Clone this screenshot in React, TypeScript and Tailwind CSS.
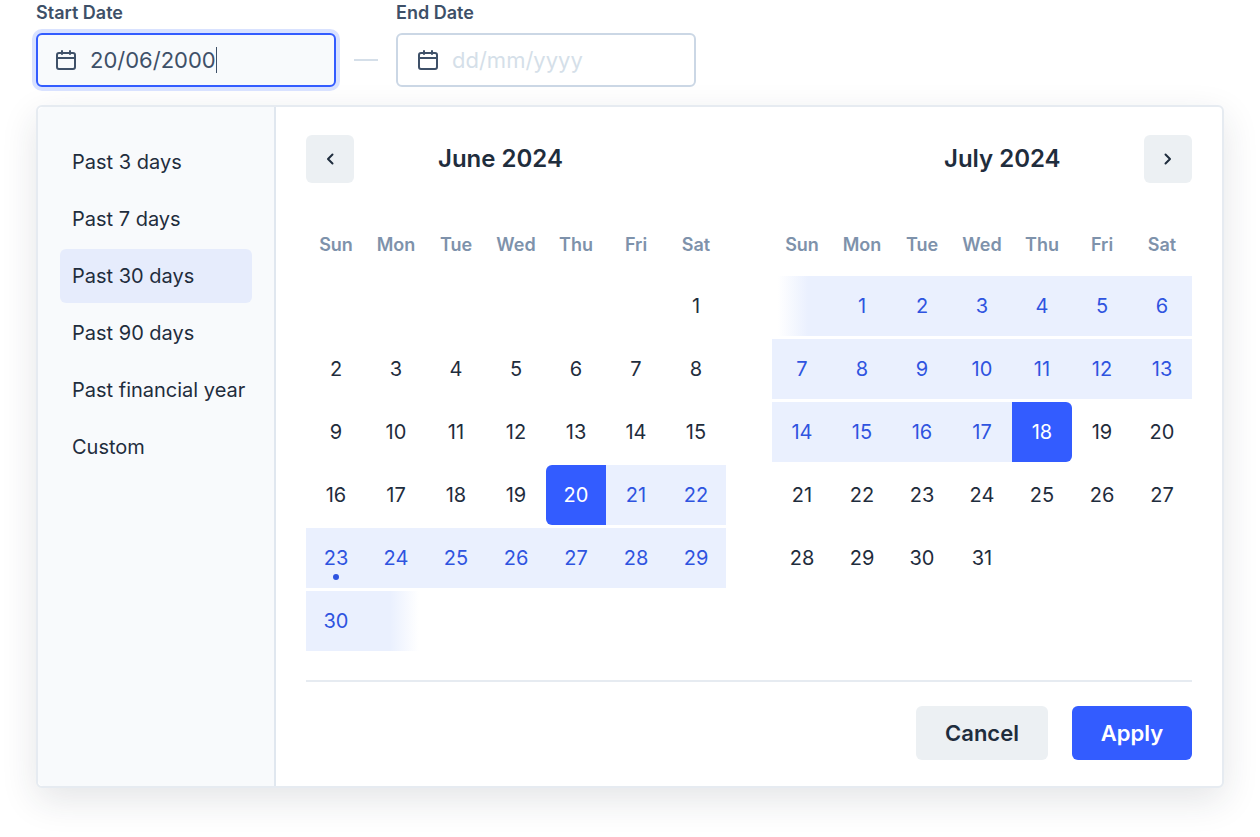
import React from "react";

const CalIcon = () => (
  <svg width="24" height="24" viewBox="0 0 24 24" fill="none" stroke="#3e5068" strokeWidth="2" strokeLinecap="round" strokeLinejoin="round">
    <rect x="3" y="5" width="18" height="16" rx="2" />
    <path d="M3 10h18M8 3v3M16 3v3" />
  </svg>
);

const presets = ["Past 3 days", "Past 7 days", "Past 30 days", "Past 90 days", "Past financial year", "Custom"];
const weekdays = ["Sun", "Mon", "Tue", "Wed", "Thu", "Fri", "Sat"];

type Props = { startPad: number; days: number; from?: number; to?: number; fadeStart?: boolean; fadeEnd?: boolean };

function Month({ startPad, days, from, to, fadeStart, fadeEnd }: Props) {
  const cells: React.ReactNode[] = [];
  const inRange = (d: number) => d >= (from ?? 1) && d <= (to ?? days);
  for (let i = 0; i < startPad; i++) {
    const fade = fadeStart && i === startPad - 1;
    cells.push(
      <div key={"p" + i} className={fade ? "h-[60px] bg-[linear-gradient(90deg,#ffffff_10%,#eaf0fe_60%)]" : "h-[60px]"} />
    );
  }
  for (let d = 1; d <= days; d++) {
    const isStart = from === d;
    const isEnd = to === d;
    const range = inRange(d) && !isStart && !isEnd;
    let cls = "relative flex h-[60px] items-center justify-center text-[20px] text-[#1f2d3d]";
    if (range) cls = "relative flex h-[60px] items-center justify-center text-[20px] bg-[#eaf0fe] text-[#2f54e0]";
    if (isStart) cls = "relative flex h-[60px] items-center justify-center text-[20px] bg-[#335cff] text-white rounded-l-[6px]";
    if (isEnd) cls = "relative flex h-[60px] items-center justify-center text-[20px] bg-[#335cff] text-white rounded-r-[6px]";
    cells.push(
      <div key={d} className={cls}>
        {d}
        {from === 20 && d === 23 && <span className="absolute left-[27px] top-[46px] h-[6px] w-[6px] rounded-full bg-[#2f54e0]" />}
      </div>
    );
  }
  if (fadeEnd) {
    cells.push(<div key="f" className="h-[60px] bg-[linear-gradient(90deg,#eaf0fe_40%,#ffffff_88%)]" />);
  }
  return (
    <div className="w-[420px]">
      <div className="grid grid-cols-7">
        {weekdays.map((w) => (
          <div key={w} className="flex h-[32px] items-center justify-center text-[18px] font-semibold text-[#7e92ab]">{w}</div>
        ))}
      </div>
      <div className="mt-[16px] grid grid-cols-7 gap-y-[3px]">{cells}</div>
    </div>
  );
}

export default function App() {
  return (
    <div className="h-[837px] w-[1260px] overflow-hidden bg-white px-[36px] text-[#1f2d3d] font-['Inter',sans-serif]">
      <div className="flex items-end">
        <div className="w-[300px]">
          <div className="h-[33px] pt-[1px] text-[18px] font-semibold leading-[24px] text-[#3e5068]">Start Date</div>
          <div className="flex h-[54px] items-center gap-[12px] rounded-[6px] border-2 border-[#335cff] bg-[#f8fafc] pl-[16px] shadow-[0_0_0_4px_#d9e2ff]">
            <CalIcon />
            <span className="flex items-center text-[22px] text-[#3e5068]">20/06/2000<span className="h-[26px] w-[1px] bg-[#3e5068]" /></span>
          </div>
        </div>
        <div className="mx-[18px] mb-[26px] h-[2px] w-[24px] bg-[#d5dfe9]" />
        <div className="w-[300px]">
          <div className="h-[33px] pt-[1px] text-[18px] font-semibold leading-[24px] text-[#3e5068]">End Date</div>
          <div className="flex h-[54px] items-center gap-[12px] rounded-[6px] border-2 border-[#cbd7e5] bg-white pl-[18px]">
            <CalIcon />
            <span className="text-[22px] text-[#d5dfe9]">dd/mm/yyyy</span>
          </div>
        </div>
      </div>
      <div className="mt-[18px] flex h-[683px] w-[1188px] rounded-[6px] border-2 border-[#e6ebf1] bg-white shadow-[0_12px_36px_rgba(31,45,61,0.12)]">
        <div className="w-[238px] shrink-0 rounded-l-[6px] border-r-2 border-[#e0e7ef] bg-[#f8fafc] pl-[22px] pt-[28px]">
          <div className="flex w-[192px] flex-col gap-[3px]">
            {presets.map((p) => (
              <div key={p} className={p === "Past 30 days" ? "flex h-[54px] items-center whitespace-nowrap rounded-[6px] bg-[#e6ecfc] px-[12px] text-[20px] text-[#1f2d3d]" : "flex h-[54px] items-center whitespace-nowrap px-[12px] text-[20px] text-[#1f2d3d]"}>{p}</div>
            ))}
          </div>
        </div>
        <div className="flex-1 px-[30px] pt-[28px]">
          <div className="flex items-center justify-between">
            <button className="flex h-[48px] w-[48px] items-center justify-center rounded-[6px] bg-[#ecf0f3]">
              <svg width="24" height="24" viewBox="0 0 24 24" fill="none" stroke="#1f2d3d" strokeWidth="2" strokeLinecap="round" strokeLinejoin="round"><path d="M14.5 7.5L10 12l4.5 4.5" /></svg>
            </button>
            <div className="ml-[84px] w-[124px] whitespace-nowrap text-center text-[24px] font-semibold text-[#1f2d3d]">June 2024</div>
            <div className="flex-1" />
            <div className="mr-[85px] w-[115px] whitespace-nowrap text-center text-[24px] font-semibold text-[#1f2d3d]">July 2024</div>
            <button className="flex h-[48px] w-[48px] items-center justify-center rounded-[6px] bg-[#ecf0f3]">
              <svg width="24" height="24" viewBox="0 0 24 24" fill="none" stroke="#1f2d3d" strokeWidth="2" strokeLinecap="round" strokeLinejoin="round"><path d="M9.5 7.5L14 12l-4.5 4.5" /></svg>
            </button>
          </div>
          <div className="mt-[45px] flex justify-between">
            <Month startPad={6} days={30} from={20} fadeEnd />
            <Month startPad={1} days={31} to={18} fadeStart />
          </div>
          <div className="mt-[29px] h-[2px] bg-[#e6ebf1]" />
          <div className="mt-[24px] flex justify-end gap-[24px]">
            <button className="h-[54px] w-[132px] rounded-[6px] bg-[#ecf0f3] text-[22px] font-semibold text-[#1f2d3d]">Cancel</button>
            <button className="h-[54px] w-[120px] rounded-[6px] bg-[#335cff] text-[22px] font-semibold text-white">Apply</button>
          </div>
        </div>
      </div>
    </div>
  );
}
